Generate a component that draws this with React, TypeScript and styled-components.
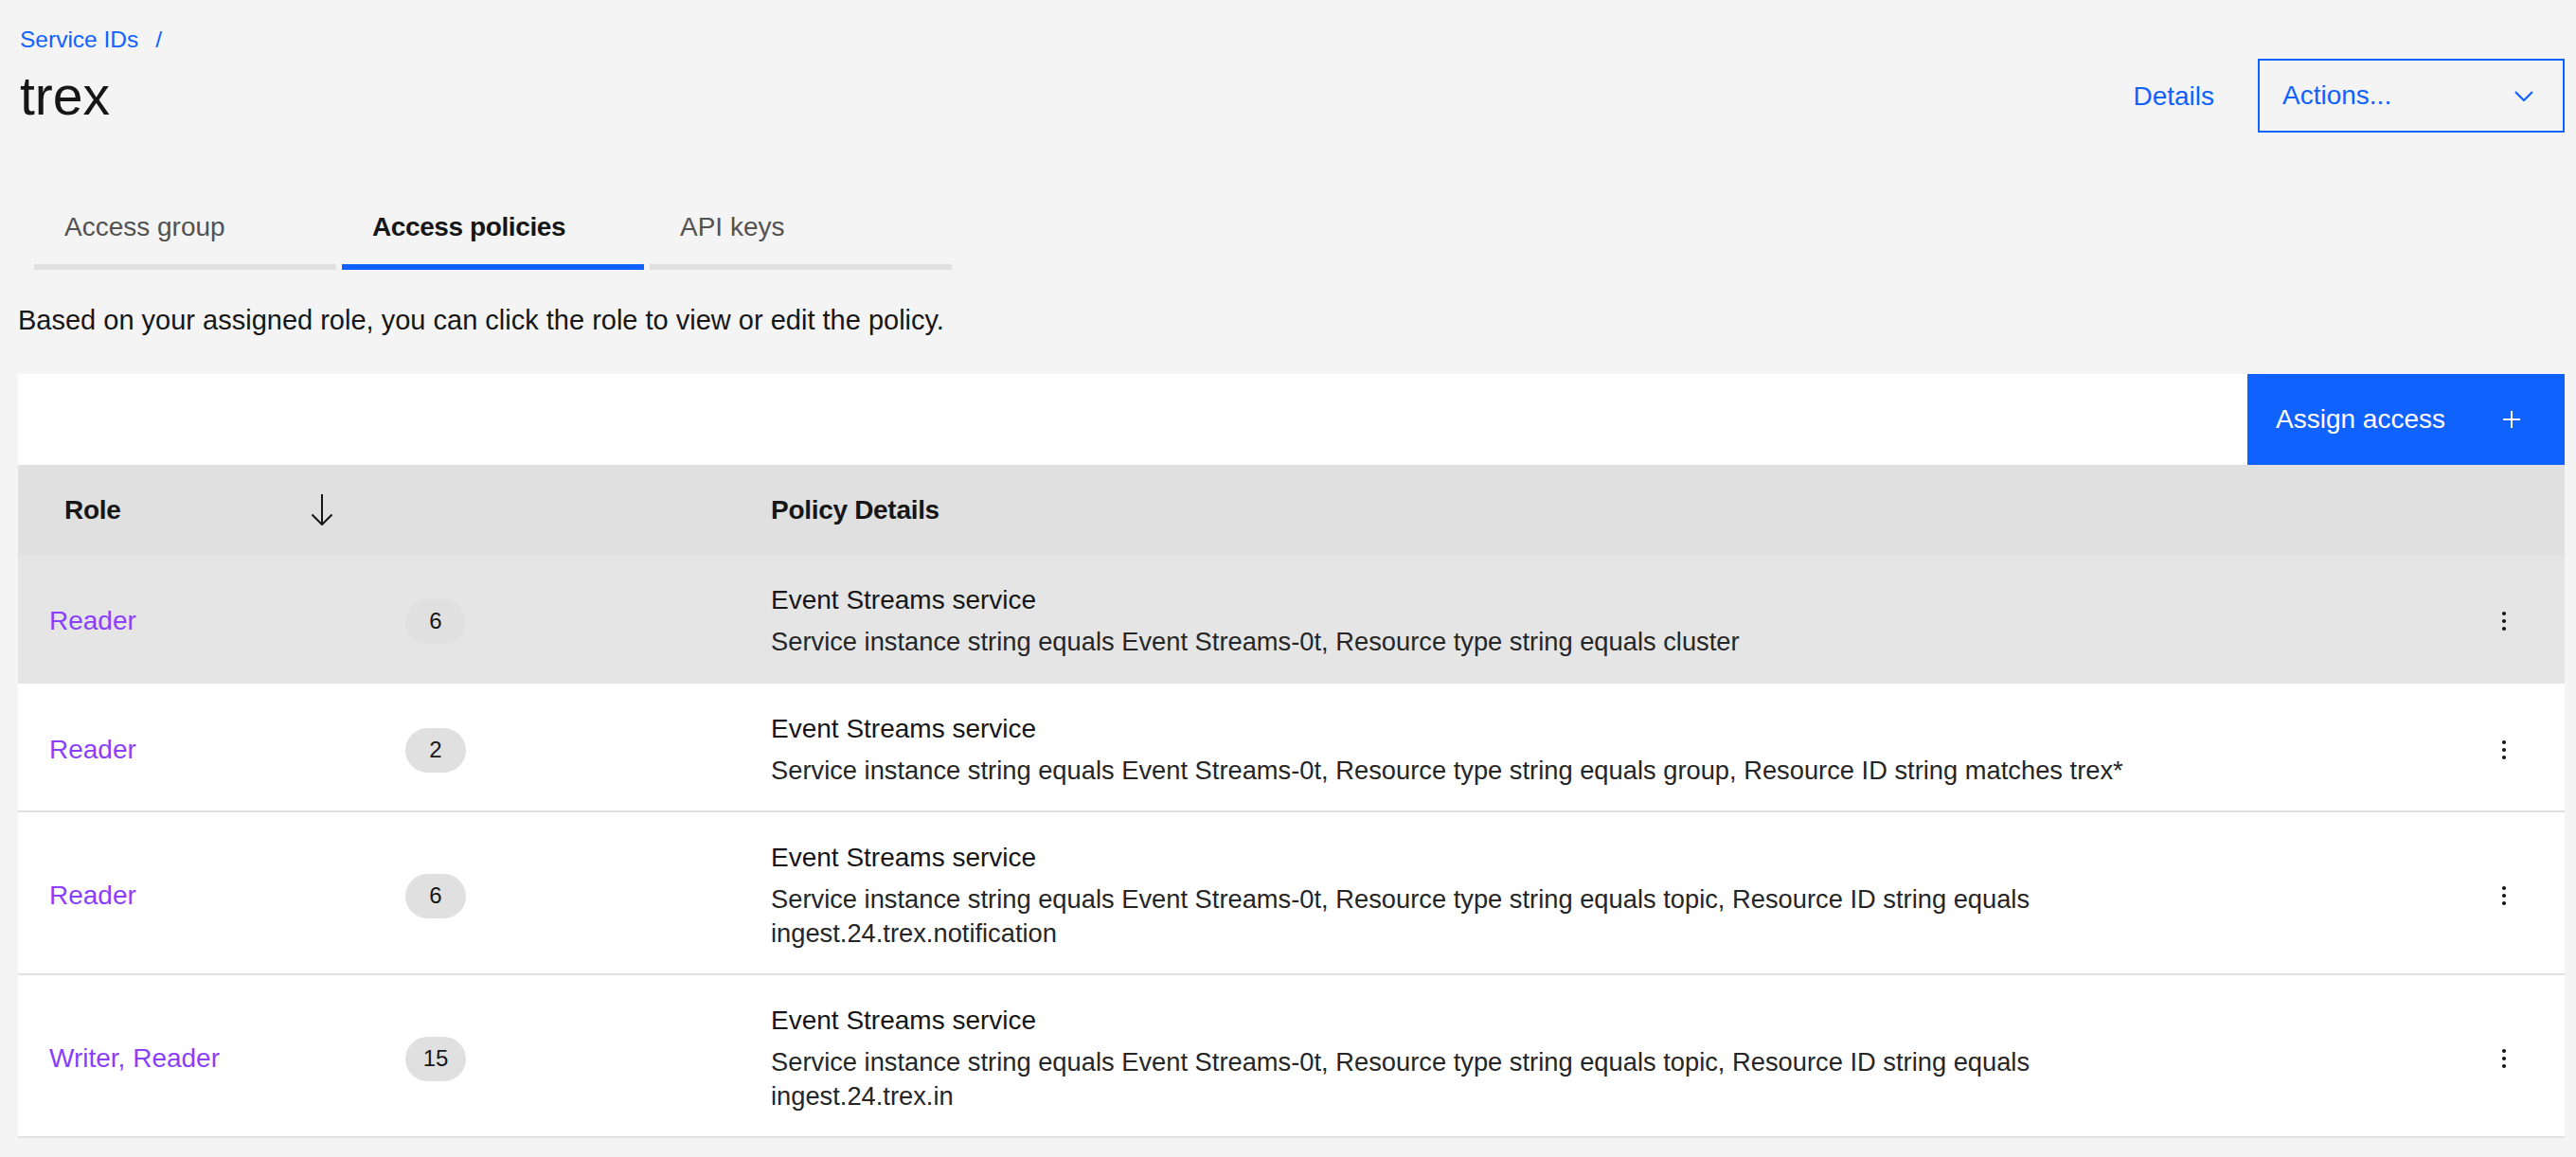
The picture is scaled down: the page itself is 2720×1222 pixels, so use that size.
import React from 'react';
import styled, { createGlobalStyle } from 'styled-components';

const colors = {
  bg: '#f4f4f4',
  white: '#ffffff',
  blue: '#0f62fe',
  text: '#161616',
  textSecondary: '#525252',
  border: '#e0e0e0',
  hover: '#e5e5e5',
  purple: '#8a3ffc',
};

const GlobalStyle = createGlobalStyle`
  * {
    box-sizing: border-box;
  }

  body {
    margin: 0;
    background: ${colors.bg};
    color: ${colors.text};
    font-family: 'Liberation Sans', Arial, sans-serif;
  }
`;

const Page = styled.main`
  padding: 26px 12px 18px 19px;
`;

const Breadcrumb = styled.nav`
  display: flex;
  gap: 18px;
  padding-left: 2px;
  font-size: 24.5px;
  line-height: 32px;
  color: ${colors.blue};
`;

const TitleRow = styled.div`
  display: flex;
  align-items: center;
  margin-top: 4px;
  height: 78px;
`;

const Title = styled.h1`
  flex: 1;
  margin: 0;
  padding-left: 2px;
  font-size: 57px;
  line-height: 78px;
  font-weight: 400;
  color: ${colors.text};
`;

const DetailsLink = styled.a`
  font-size: 28px;
  color: ${colors.blue};
  text-decoration: none;
  margin: 2px 46px 0 0;
`;

const ActionsSelect = styled.button`
  display: flex;
  align-items: center;
  justify-content: space-between;
  width: 324px;
  height: 78px;
  padding: 0 31px 0 24px;
  border: 2px solid ${colors.blue};
  background: transparent;
  color: ${colors.blue};
  font-family: inherit;
  font-size: 28px;
`;

const Tabs = styled.div`
  display: flex;
  gap: 6px;
  margin: 61px 0 0 17px;
`;

const Tab = styled.div<{ $active?: boolean }>`
  width: 319px;
  padding: 21px 0 21px 32px;
  font-size: 28px;
  line-height: 36px;
  font-weight: ${(p) => (p.$active ? 700 : 400)};
  letter-spacing: ${(p) => (p.$active ? '-0.4px' : '0')};
  color: ${(p) => (p.$active ? colors.text : colors.textSecondary)};
  border-bottom: 6px solid ${(p) => (p.$active ? colors.blue : colors.border)};
`;

const Description = styled.p`
  margin: 35px 0 39px;
  font-size: 29px;
  line-height: 36px;
`;

const Table = styled.section`
  background: ${colors.white};
`;

const Toolbar = styled.div`
  display: flex;
  justify-content: flex-end;
  height: 96px;
`;

const PrimaryButton = styled.button`
  display: flex;
  align-items: center;
  justify-content: space-between;
  width: 335px;
  height: 96px;
  padding: 0 47px 0 30px;
  border: none;
  background: ${colors.blue};
  color: ${colors.white};
  font-family: inherit;
  font-size: 28px;
`;

const columns = `376px 64px 322px 1480px 1fr 128px`;

const HeaderRow = styled.div`
  display: grid;
  grid-template-columns: ${columns};
  align-items: center;
  height: 95px;
  padding-left: 33px;
  background: ${colors.border};
  font-size: 28px;
  font-weight: 700;
  letter-spacing: -0.3px;
`;

const RoleHeader = styled.div`
  display: flex;
  align-items: center;
  justify-content: space-between;
  padding: 0 76px 0 16px;
  grid-column: 1 / 3;
  margin-right: 64px;
`;

const PolicyHeader = styled.div`
  grid-column: 4;
`;

const Row = styled.div<{ $hover?: boolean }>`
  display: grid;
  grid-template-columns: ${columns};
  align-items: center;
  padding: 30px 0 24px 33px;
  background: ${(p) => (p.$hover ? colors.hover : colors.white)};
  border-bottom: 2px solid ${(p) => (p.$hover ? colors.hover : colors.border)};
`;

const RoleLink = styled.a`
  font-size: 28px;
  color: ${colors.purple};
  text-decoration: none;
`;

const Count = styled.span`
  display: flex;
  align-items: center;
  justify-content: center;
  height: 47px;
  border-radius: 24px;
  background: ${colors.border};
  font-size: 24px;
  color: ${colors.text};
`;

const Policy = styled.div`
  grid-column: 4;
  font-size: 28px;
  line-height: 36px;
  color: ${colors.text};
`;

const PolicyTitle = styled.div`
  margin-bottom: 8px;
`;

const PolicyDetail = styled.div`
  font-size: 27.3px;
  color: #262626;
`;

const Overflow = styled.div`
  grid-column: 6;
  display: flex;
  justify-content: center;
`;

const ArrowDown = () => (
  <svg width="24" height="33" viewBox="0 0 24 33" fill="none" stroke={colors.text} strokeWidth="2">
    <path d="M12 0V32M1.5 21.5L12 32L22.5 21.5" />
  </svg>
);

const Chevron = () => (
  <svg width="20" height="11" viewBox="0 0 20 11" fill="none" stroke={colors.blue} strokeWidth="2.2">
    <path d="M1 1L10 10L19 1" />
  </svg>
);

const Plus = () => (
  <svg width="18" height="18" viewBox="0 0 18 18" fill="none" stroke={colors.white} strokeWidth="2">
    <path d="M9 0V18M0 9H18" />
  </svg>
);

const Dots = () => (
  <svg width="6" height="22" viewBox="0 0 6 22" fill={colors.text}>
    <circle cx="3" cy="3" r="2.1" />
    <circle cx="3" cy="11" r="2.1" />
    <circle cx="3" cy="19" r="2.1" />
  </svg>
);

const policies = [
  {
    role: 'Reader',
    count: 6,
    detail: 'Service instance string equals Event Streams-0t, Resource type string equals cluster',
    hover: true,
  },
  {
    role: 'Reader',
    count: 2,
    detail:
      'Service instance string equals Event Streams-0t, Resource type string equals group, Resource ID string matches trex*',
  },
  {
    role: 'Reader',
    count: 6,
    detail:
      'Service instance string equals Event Streams-0t, Resource type string equals topic, Resource ID string equals ingest.24.trex.notification',
  },
  {
    role: 'Writer, Reader',
    count: 15,
    detail:
      'Service instance string equals Event Streams-0t, Resource type string equals topic, Resource ID string equals ingest.24.trex.in',
  },
];

const App: React.FC = () => {
  return (
    <>
      <GlobalStyle />
      <Page>
        <Breadcrumb>
          <span>Service IDs</span>
          <span>/</span>
        </Breadcrumb>
        <TitleRow>
          <Title>trex</Title>
          <DetailsLink href="#">Details</DetailsLink>
          <ActionsSelect>
            <span>Actions...</span>
            <Chevron />
          </ActionsSelect>
        </TitleRow>

        <Tabs>
          <Tab>Access group</Tab>
          <Tab $active>Access policies</Tab>
          <Tab>API keys</Tab>
        </Tabs>

        <Description>
          Based on your assigned role, you can click the role to view or edit the policy.
        </Description>

        <Table>
          <Toolbar>
            <PrimaryButton>
              <span>Assign access</span>
              <Plus />
            </PrimaryButton>
          </Toolbar>
          <HeaderRow>
            <RoleHeader>
              <span>Role</span>
              <ArrowDown />
            </RoleHeader>
            <PolicyHeader>Policy Details</PolicyHeader>
          </HeaderRow>
          {policies.map((p, i) => (
            <Row key={i} $hover={p.hover}>
              <RoleLink href="#">{p.role}</RoleLink>
              <Count>{p.count}</Count>
              <Policy>
                <PolicyTitle>Event Streams service</PolicyTitle>
                <PolicyDetail>{p.detail}</PolicyDetail>
              </Policy>
              <Overflow>
                <Dots />
              </Overflow>
            </Row>
          ))}
        </Table>
      </Page>
    </>
  );
};

export default App;
